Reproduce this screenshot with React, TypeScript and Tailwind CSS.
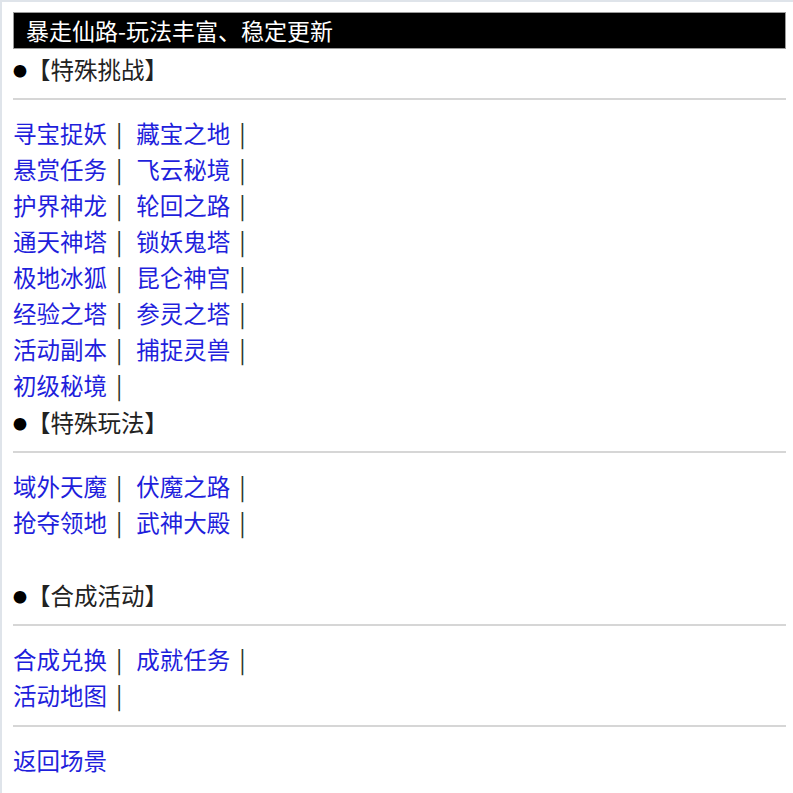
import React from 'react';

type Section = {
  title: string;
  links: string[];
  gapBefore?: boolean;
};

const sections: Section[] = [
  {
    title: '特殊挑战',
    links: [
      '寻宝捉妖', '藏宝之地',
      '悬赏任务', '飞云秘境',
      '护界神龙', '轮回之路',
      '通天神塔', '锁妖鬼塔',
      '极地冰狐', '昆仑神宫',
      '经验之塔', '参灵之塔',
      '活动副本', '捕捉灵兽',
      '初级秘境',
    ],
  },
  {
    title: '特殊玩法',
    links: ['域外天魔', '伏魔之路', '抢夺领地', '武神大殿'],
  },
  {
    title: '合成活动',
    links: ['合成兑换', '成就任务', '活动地图'],
    gapBefore: true,
  },
];

// group links two per line, like the old wap page
const pairs = (list: string[]) => {
  const rows: string[][] = [];
  for (let i = 0; i < list.length; i += 2) rows.push(list.slice(i, i + 2));
  return rows;
};

const Divider = () => <div className="h-[2px] bg-[#d6d6d6] mt-[10px] mb-[15px]" />;

const LinkItem: React.FC<{ label: string }> = ({ label }) => (
  <span className="inline-flex items-center">
    <a href="#" className="text-[#1f1fdc]">{label}</a>
    <span className="text-[#2a332a] ml-[9px] mr-[14px]">|</span>
  </span>
);

const App: React.FC = () => {
  return (
    <div
      className="min-h-[793px] bg-white border-l-2 border-t-2 border-[#dfe4ea] pl-[11px] pr-[7px] pt-[10px] text-[23.5px] leading-[36px] text-[#222]"
      style={{ fontFamily: '"Noto Sans CJK SC", "Noto Sans", sans-serif' }}
    >
      <div className="bg-black text-white h-[37px] px-[12px] leading-[35px] text-[23px] border border-[#9a9a9a]">
        暴走仙路-玩法丰富、稳定更新
      </div>

      <div className="mt-[2px]">
        {sections.map((s) => (
          <div key={s.title}>
            {s.gapBefore && <div className="h-[36px]" />}
            <div className="mt-px">
              <span className="text-[14px] text-black align-[3px]">●</span>【{s.title}】
            </div>
            <Divider />
            {pairs(s.links).map((row, i) => (
              <div key={i}>
                {row.map((l) => (
                  <LinkItem key={l} label={l} />
                ))}
              </div>
            ))}
          </div>
        ))}
        <div className="h-[2px] bg-[#d6d6d6] mt-[12px] mb-[15px]" />
        <div>
          <a href="#" className="text-[#1f1fdc]">返回场景</a>
        </div>
      </div>
    </div>
  );
};

export default App;
